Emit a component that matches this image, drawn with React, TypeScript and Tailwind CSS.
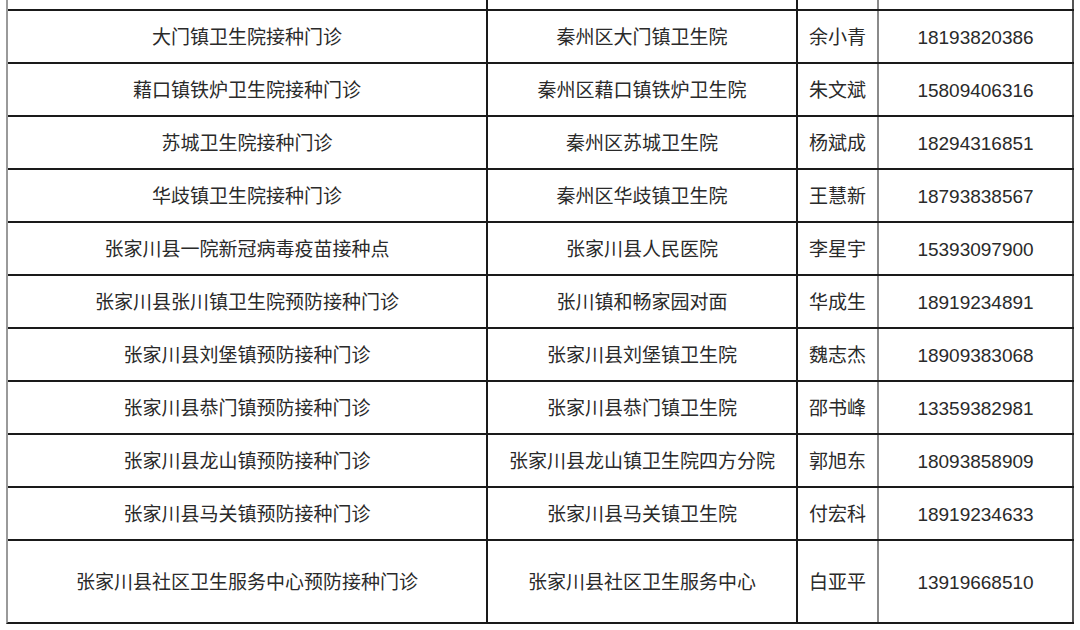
const rows = [
  ["大门镇卫生院接种门诊", "秦州区大门镇卫生院", "余小青", "18193820386"],
  ["藉口镇铁炉卫生院接种门诊", "秦州区藉口镇铁炉卫生院", "朱文斌", "15809406316"],
  ["苏城卫生院接种门诊", "秦州区苏城卫生院", "杨斌成", "18294316851"],
  ["华歧镇卫生院接种门诊", "秦州区华歧镇卫生院", "王慧新", "18793838567"],
  ["张家川县一院新冠病毒疫苗接种点", "张家川县人民医院", "李星宇", "15393097900"],
  ["张家川县张川镇卫生院预防接种门诊", "张川镇和畅家园对面", "华成生", "18919234891"],
  ["张家川县刘堡镇预防接种门诊", "张家川县刘堡镇卫生院", "魏志杰", "18909383068"],
  ["张家川县恭门镇预防接种门诊", "张家川县恭门镇卫生院", "邵书峰", "13359382981"],
  ["张家川县龙山镇预防接种门诊", "张家川县龙山镇卫生院四方分院", "郭旭东", "18093858909"],
  ["张家川县马关镇预防接种门诊", "张家川县马关镇卫生院", "付宏科", "18919234633"],
  ["张家川县社区卫生服务中心预防接种门诊", "张家川县社区卫生服务中心", "白亚平", "13919668510"],
];

const font = { fontFamily: '"Liberation Sans", "Noto Sans CJK SC", sans-serif' };

function Row({ cells, tall }: { cells: string[]; tall?: boolean }) {
  return (
    <div
      className={`grid grid-cols-[480px_310px_81px_195px] border-t-2 border-[#1a1a1a] ${tall ? "h-[83px]" : "h-[53px]"}`}
    >
      <div className="flex items-center justify-center pt-[3px] border-r-2 border-[#1a1a1a]">{cells[0]}</div>
      <div className="flex items-center justify-center pt-[3px] border-r-2 border-[#1a1a1a]">{cells[1]}</div>
      <div className="flex items-center justify-center pt-[3px] border-r-2 border-[#8a8a8a]">{cells[2]}</div>
      <div className="flex items-center justify-center pt-[3px] border-r-2 border-[#555]">{cells[3]}</div>
    </div>
  );
}

export default function App() {
  return (
    <div className="w-[1080px] h-[630px] bg-white overflow-hidden text-[19px] text-[#2a2a2a]" style={font}>
      <div className="ml-[6px] w-[1068px] border-l-2 border-[#9a9a9a] border-b-2 border-b-[#1a1a1a]">
        <div className="grid grid-cols-[480px_310px_81px_195px] h-[9px]">
          <div className="border-r-2 border-[#1a1a1a]" />
          <div className="border-r-2 border-[#1a1a1a]" />
          <div className="border-r-2 border-[#8a8a8a]" />
          <div className="border-r-2 border-[#555]" />
        </div>
        {rows.map((r, i) => (
          <Row key={i} cells={r} tall={i === rows.length - 1} />
        ))}
      </div>
    </div>
  );
}
